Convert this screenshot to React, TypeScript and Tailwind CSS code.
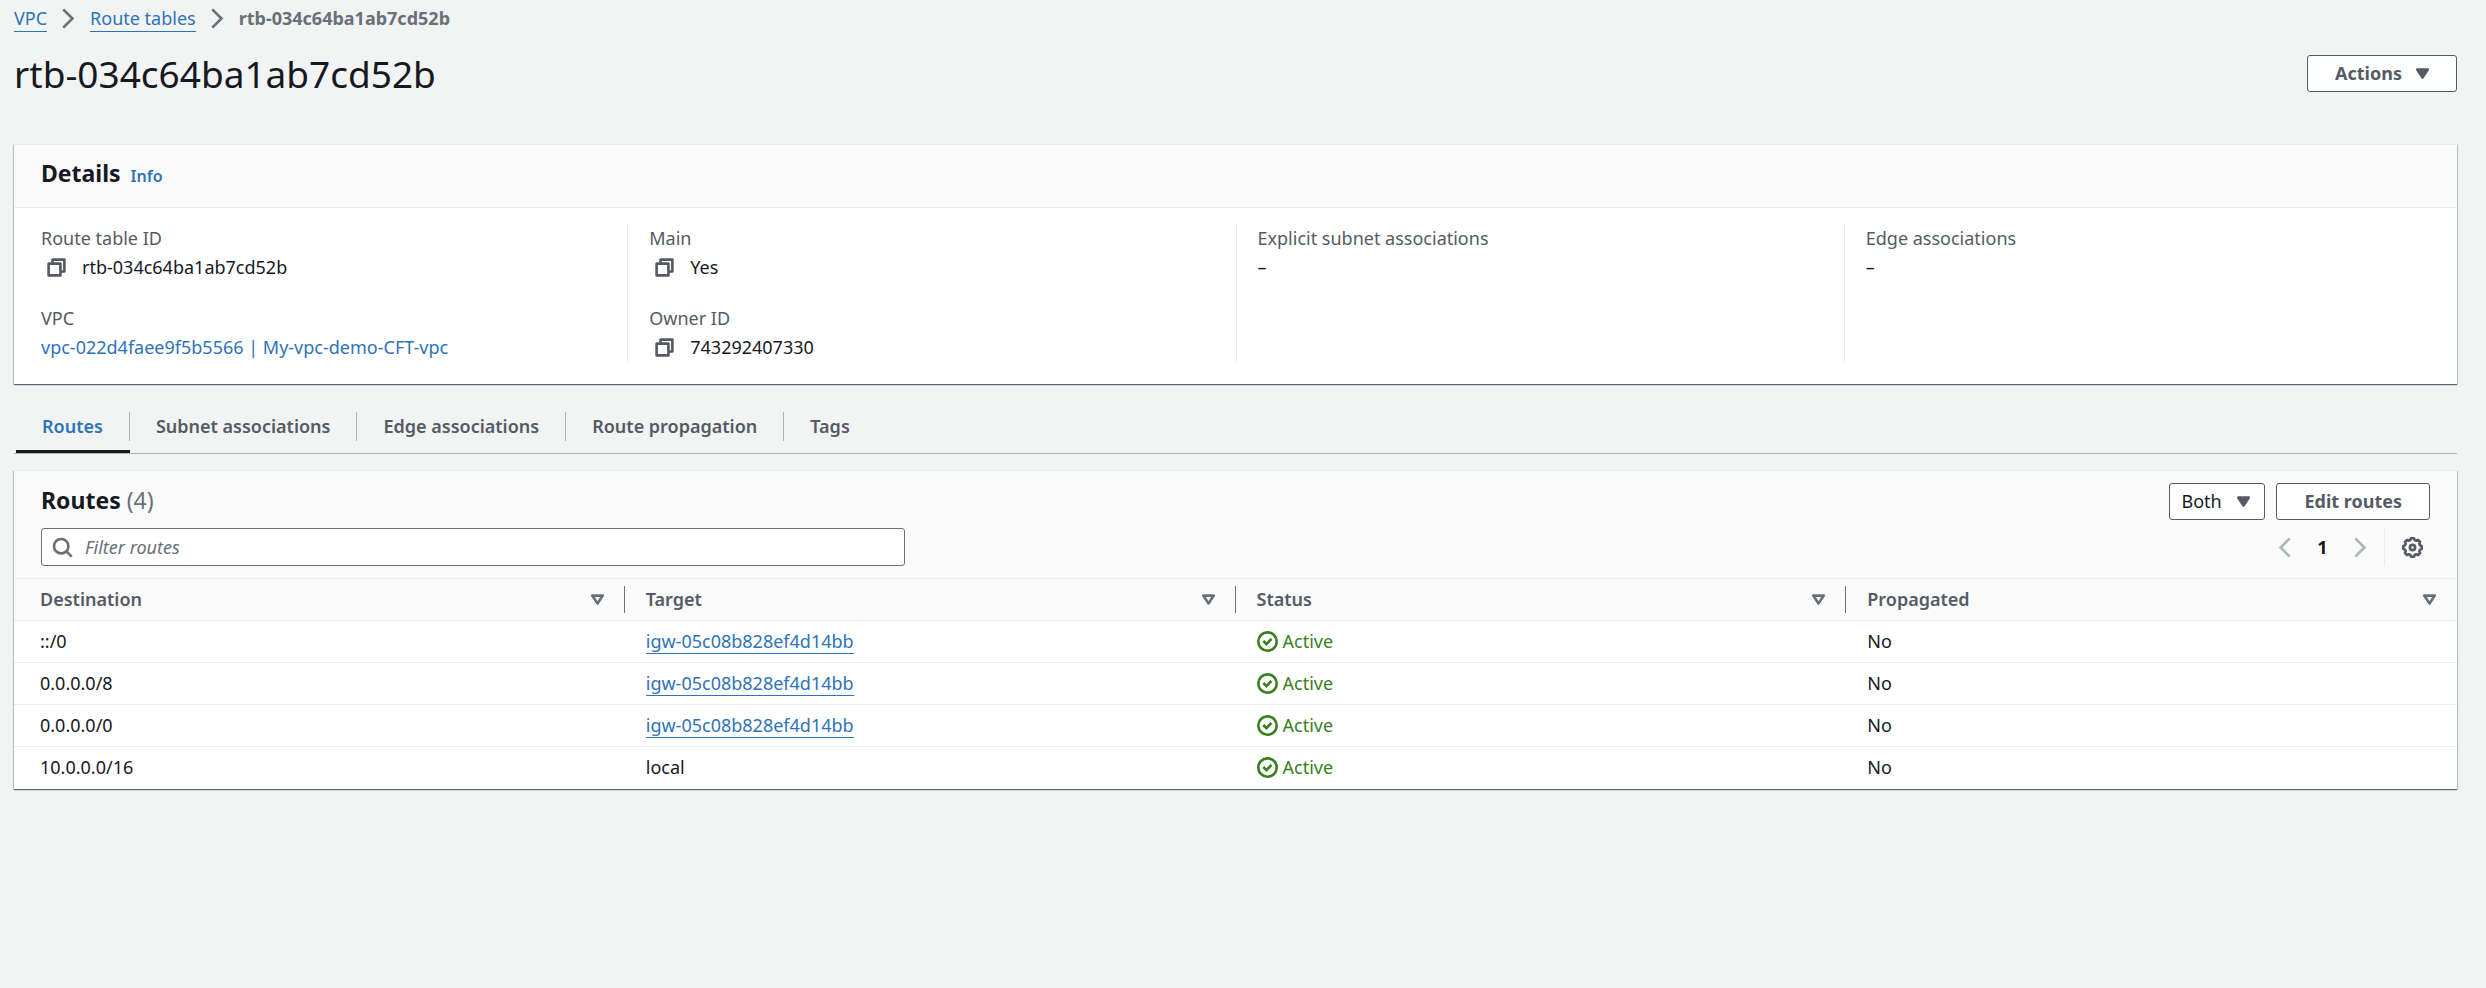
import type { ReactNode } from "react";

const GEAR_TEETH = 8;

function gearPath(): string {
  const points: string[] = [];
  for (let i = 0; i < GEAR_TEETH; i++) {
    const base = (i * 2 * Math.PI) / GEAR_TEETH - Math.PI / 2;
    const profile: [number, number][] = [
      [-0.16, 7.1],
      [0.16, 7.1],
      [0.28, 5.9],
      [0.505, 5.9],
    ];
    for (const [offset, radius] of profile) {
      const x = 8 + radius * Math.cos(base + offset);
      const y = 8 + radius * Math.sin(base + offset);
      points.push(`${x.toFixed(2)} ${y.toFixed(2)}`);
    }
  }
  return `M${points.join("L")}Z`;
}

function Icon({ children, className = "" }: { children: ReactNode; className?: string }) {
  return (
    <svg
      viewBox="0 0 16 16"
      className={`size-[21px] shrink-0 fill-none stroke-current stroke-2 ${className}`}
      aria-hidden="true"
    >
      {children}
    </svg>
  );
}

const ChevronRight = ({ className }: { className?: string }) => (
  <Icon className={className}>
    <path d="M4 1l7 7-7 7" />
  </Icon>
);

const ChevronLeft = () => (
  <Icon>
    <path d="M12 1L5 8l7 7" />
  </Icon>
);

const CaretDown = ({ className }: { className?: string }) => (
  <Icon className={className}>
    <path d="M4 5h8l-4 6z" fill="currentColor" strokeLinejoin="round" />
  </Icon>
);

const SortCaret = () => (
  <Icon className="text-[#687078]">
    <path d="M4 5h8l-4 6z" strokeLinejoin="round" />
  </Icon>
);

const CopyIcon = () => (
  <Icon>
    <path d="M2 5h9v9H2zM5 5V2h9v9h-3" strokeLinejoin="round" />
  </Icon>
);

const StatusIcon = () => (
  <Icon>
    <circle cx="8" cy="8" r="7" />
    <path d="M4.8 7.6l2.4 2.4 3.8-4" />
  </Icon>
);

const SearchIcon = () => (
  <Icon>
    <circle cx="7" cy="7" r="5.5" />
    <path d="M11 11l4 4" />
  </Icon>
);

const GearIcon = () => (
  <Icon>
    <path d={gearPath()} strokeLinejoin="round" />
    <circle cx="8" cy="8" r="2" />
  </Icon>
);

function Panel({ children }: { children: ReactNode }) {
  return (
    <section className="border-t border-[#eaeded] bg-white shadow-[0_1px_1px_0_rgba(0,28,36,0.5),1px_1px_1px_0_rgba(0,28,36,0.15),-1px_1px_1px_0_rgba(0,28,36,0.15)]">
      {children}
    </section>
  );
}

function Field({ label, copy, children }: { label: string; copy?: boolean; children: ReactNode }) {
  return (
    <div>
      <dt className="text-[#545b64]">{label}</dt>
      <dd className="flex items-center">
        {copy && (
          <button type="button" aria-label={`Copy ${label}`} className="mr-[15px] ml-[5px] text-[#545b64]">
            <CopyIcon />
          </button>
        )}
        {children}
      </dd>
    </div>
  );
}

const columnClass = "flex flex-col gap-[22px] border-l border-[#eaeded] px-[21px] first:border-transparent";

const tabs = ["Routes", "Subnet associations", "Edge associations", "Route propagation", "Tags"];

const columns = ["Destination", "Target", "Status", "Propagated"];

const routes = [
  { destination: "::/0", target: "igw-05c08b828ef4d14bb", linked: true },
  { destination: "0.0.0.0/8", target: "igw-05c08b828ef4d14bb", linked: true },
  { destination: "0.0.0.0/0", target: "igw-05c08b828ef4d14bb", linked: true },
  { destination: "10.0.0.0/16", target: "local", linked: false },
];

const linkClass = "border-b border-[#2e73b8] text-[#2e73b8]";
const buttonClass =
  "flex h-[37px] items-center rounded-[3px] border border-[#545b64] bg-white px-[27px] font-bold text-[#545b64]";

export default function App() {
  return (
    <main className="min-h-screen bg-[#f2f3f3] pr-[29px] pb-8 pl-3.5 font-['Noto_Sans',sans-serif] text-[18px] leading-[29px] text-[#16191f]">
      <nav aria-label="Breadcrumb" className="pt-1">
        <ol className="flex items-center gap-[11px]">
          <li className="flex items-center gap-[11px]">
            <a href="#vpc" className={`${linkClass} leading-[26px]`}>VPC</a>
            <ChevronRight className="text-[#687078]" />
          </li>
          <li className="flex items-center gap-[11px]">
            <a href="#route-tables" className={`${linkClass} leading-[26px]`}>Route tables</a>
            <ChevronRight className="text-[#687078]" />
          </li>
          <li className="font-bold text-[#687078]">rtb-034c64ba1ab7cd52b</li>
        </ol>
      </nav>

      <header className="mt-[18px] flex items-start justify-between">
        <h1 className="text-[37px] leading-[45px]">rtb-034c64ba1ab7cd52b</h1>
        <button type="button" className={`${buttonClass} mt-1 gap-2.5`}>
          Actions
          <CaretDown className="-mr-1" />
        </button>
      </header>

      <div className="mt-12">
        <Panel>
          <div className="flex items-baseline gap-2.5 border-b border-[#eaeded] bg-[#fafafa] px-[27px] pt-3 pb-[18px]">
            <h2 className="text-[23px] leading-8 font-bold">Details</h2>
            <a href="#info" className="text-[16px] leading-6 font-semibold text-[#2e73b8]">Info</a>
          </div>
          <dl className="grid grid-cols-4 px-[5px] pt-4 pb-[22px]">
            <div className={columnClass}>
              <Field label="Route table ID" copy>rtb-034c64ba1ab7cd52b</Field>
              <Field label="VPC">
                <a href="#vpc-detail" className="text-[#2e73b8]">vpc-022d4faee9f5b5566 | My-vpc-demo-CFT-vpc</a>
              </Field>
            </div>
            <div className={columnClass}>
              <Field label="Main" copy>Yes</Field>
              <Field label="Owner ID" copy>743292407330</Field>
            </div>
            <div className={columnClass}>
              <Field label="Explicit subnet associations">–</Field>
            </div>
            <div className={columnClass}>
              <Field label="Edge associations">–</Field>
            </div>
          </dl>
        </Panel>
      </div>

      <div role="tablist" className="mt-[17px] flex border-b border-[#aab7b8] pl-0.5">
        {tabs.map((tab, i) => (
          <button
            key={tab}
            type="button"
            role="tab"
            aria-selected={i === 0}
            className={`flex items-center border-b-[3px] pt-[11px] pb-[9px] font-semibold ${
              i === 0 ? "border-[#16191f] text-[#2e73b8]" : "border-transparent text-[#545b64]"
            }`}
          >
            <span className={`px-[26px] ${i < tabs.length - 1 ? "border-r border-[#aab7b8]" : ""}`}>{tab}</span>
          </button>
        ))}
      </div>

      <div className="mt-4">
        <Panel>
          <div className="bg-[#fafafa] px-[27px] py-3">
            <div className="flex items-center justify-between">
              <h2 className="pb-1 text-[23px] leading-8 font-bold">
                Routes <span className="font-normal text-[#687078]">(4)</span>
              </h2>
              <div className="flex gap-[11px]">
                <div className="relative">
                  <select
                    aria-label="Route filter"
                    className="h-[37px] w-24 appearance-none rounded-[3px] border border-[#545b64] bg-white pl-[11px]"
                  >
                    <option>Both</option>
                  </select>
                  <CaretDown className="pointer-events-none absolute top-2 right-[11px] text-[#545b64]" />
                </div>
                <button type="button" className={buttonClass}>Edit routes</button>
              </div>
            </div>
            <div className="mt-2 flex items-center justify-between">
              <label className="flex h-[38px] w-full max-w-[864px] items-center gap-3 rounded-[3px] border border-[#687078] bg-white px-2.5 text-[#687078]">
                <SearchIcon />
                <input
                  type="text"
                  aria-label="Filter routes"
                  placeholder="Filter routes"
                  className="w-full min-w-0 outline-none placeholder:text-[#687078] placeholder:italic"
                />
              </label>
              <div className="flex h-[38px] items-center">
                <button type="button" aria-label="Previous page" className="text-[#aab7b8]">
                  <ChevronLeft />
                </button>
                <button type="button" className="mx-[13px] w-[29px] text-center font-bold">1</button>
                <button type="button" aria-label="Next page" className="text-[#aab7b8]">
                  <ChevronRight />
                </button>
                <div className="ml-[13px] flex h-full items-center border-l border-[#eaeded] pr-[7px] pl-[17px]">
                  <button type="button" aria-label="Preferences" className="text-[#545b64]">
                    <GearIcon />
                  </button>
                </div>
              </div>
            </div>
          </div>
          <table className="w-full table-fixed border-collapse text-left">
            <thead>
              <tr className="h-[42px] border-y border-[#eaeded] bg-[#fafafa]">
                {columns.map((name, i) => (
                  <th key={name} scope="col" className="p-0 font-semibold text-[#545b64]">
                    <div
                      className={`flex h-[27px] items-center justify-between ${
                        i === 0 ? "pl-[26px]" : "pl-[21px]"
                      } ${i < columns.length - 1 ? "border-r border-[#687078] pr-4" : "pr-[17px]"}`}
                    >
                      {name}
                      <button type="button" aria-label={`Sort by ${name}`}>
                        <SortCaret />
                      </button>
                    </div>
                  </th>
                ))}
              </tr>
            </thead>
            <tbody>
              {routes.map((route) => (
                <tr key={route.destination} className="h-[42px] border-b border-[#eaeded] last:border-b-0">
                  <td className="py-0 pr-4 pl-[26px]">{route.destination}</td>
                  <td className="py-0 pr-4 pl-[21px]">
                    {route.linked ? (
                      <a href="#gateway" className={linkClass}>{route.target}</a>
                    ) : (
                      route.target
                    )}
                  </td>
                  <td className="py-0 pr-4 pl-[21px]">
                    <span className="flex items-center gap-[5px] text-[#38801c]">
                      <StatusIcon />
                      Active
                    </span>
                  </td>
                  <td className="py-0 pr-4 pl-[21px]">No</td>
                </tr>
              ))}
            </tbody>
          </table>
        </Panel>
      </div>
    </main>
  );
}
